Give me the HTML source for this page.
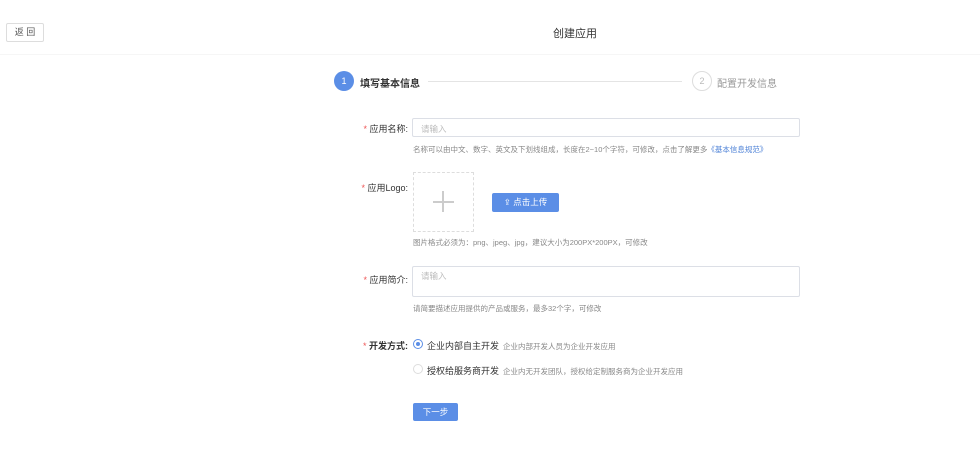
<!DOCTYPE html>
<html><head><meta charset="utf-8"><style>
body{margin:0;width:980px;height:457px;background:#fff;font-family:"Liberation Sans","Noto Sans CJK SC",sans-serif;position:relative;overflow:hidden;color:#333}
.a{position:absolute;white-space:nowrap}
.lbl{font-size:9px;color:#333;text-align:right;width:80px}
.lbl b{color:#e55;font-weight:normal}
.hint{font-size:7.5px;color:#888}
.inp{border:1px solid #dcdfe6;border-radius:2px;box-sizing:border-box;background:#fff}
.ph{font-size:8.5px;color:#bbb}
</style></head><body>
<div class="a" style="left:6px;top:23px;width:38px;height:19px;border:1px solid #ddd;box-sizing:border-box;border-radius:2px;font-size:9px;color:#555;text-align:center;line-height:17px">返 回</div>
<div class="a" style="left:0;top:54px;width:980px;border-top:1px solid #f6f6f6"></div>
<div class="a" style="left:553px;top:25px;font-size:11px;color:#333">创建应用</div>

<div class="a" style="left:334px;top:71px;width:20px;height:20px;border-radius:50%;background:#5b8ee6;color:#fff;font-size:9px;text-align:center;line-height:20px">1</div>
<div class="a" style="left:360px;top:75px;font-size:10px;font-weight:bold;color:#333">填写基本信息</div>
<div class="a" style="left:428px;top:81px;width:254px;border-top:1px solid #e4e4e4"></div>
<div class="a" style="left:692px;top:71px;width:20px;height:20px;border-radius:50%;border:1px solid #ddd;box-sizing:border-box;color:#bbb;font-size:9px;text-align:center;line-height:18px">2</div>
<div class="a" style="left:717px;top:75px;font-size:10px;color:#999">配置开发信息</div>

<div class="a lbl" style="left:328px;top:122px"><b>*</b> 应用名称:</div>
<div class="a inp" style="left:412px;top:118px;width:388px;height:19px"><span class="a ph" style="left:8px;top:4px">请输入</span></div>
<div class="a hint" style="left:413px;top:144px">名称可以由中文、数字、英文及下划线组成，长度在2~10个字符，可修改，点击了解更多<span style="color:#4a7fd6">《基本信息规范》</span></div>

<div class="a lbl" style="left:328px;top:181px"><b>*</b> 应用Logo:</div>
<div class="a" style="left:413px;top:172px;width:61px;height:60px;border:1px dashed #ddd;box-sizing:border-box"></div>
<div class="a" style="left:433px;top:201px;width:21px;border-top:2px solid #ccc"></div>
<div class="a" style="left:442px;top:191px;height:21px;border-left:2px solid #ccc"></div>
<div class="a" style="left:492px;top:193px;width:67px;height:19px;background:#5b8ee6;border-radius:2px;color:#fff;font-size:8.5px;text-align:center;line-height:19px">⇪ 点击上传</div>
<div class="a hint" style="left:413px;top:237px">图片格式必须为：png、jpeg、jpg，建议大小为200PX*200PX，可修改</div>

<div class="a lbl" style="left:328px;top:273px"><b>*</b> 应用简介:</div>
<div class="a inp" style="left:412px;top:266px;width:388px;height:31px"><span class="a ph" style="left:8px;top:3px">请输入</span></div>
<div class="a hint" style="left:413px;top:303px">请简要描述应用提供的产品或服务，最多32个字，可修改</div>

<div class="a lbl" style="left:328px;top:339px;font-weight:bold"><b>*</b> 开发方式:</div>
<div class="a" style="left:413px;top:339px;width:10px;height:10px;border:1px solid #5b8ee6;border-radius:50%;box-sizing:border-box"></div>
<div class="a" style="left:416px;top:342px;width:4px;height:4px;background:#5b8ee6;border-radius:50%"></div>
<div class="a" style="left:427px;top:339px;font-size:9px;color:#333">企业内部自主开发</div>
<div class="a hint" style="left:503px;top:341px">企业内部开发人员为企业开发应用</div>
<div class="a" style="left:413px;top:364px;width:10px;height:10px;border:1px solid #ddd;border-radius:50%;box-sizing:border-box"></div>
<div class="a" style="left:427px;top:364px;font-size:9px;color:#333">授权给服务商开发</div>
<div class="a hint" style="left:503px;top:366px">企业内无开发团队，授权给定制服务商为企业开发应用</div>

<div class="a" style="left:413px;top:403px;width:45px;height:18px;background:#5b8ee6;border-radius:2px;color:#fff;font-size:8.5px;text-align:center;line-height:18px">下一步</div>
</body></html>
